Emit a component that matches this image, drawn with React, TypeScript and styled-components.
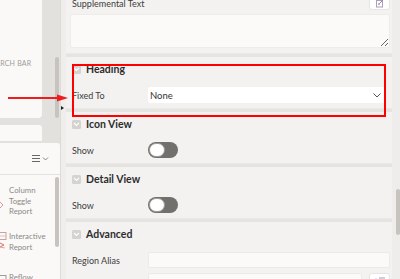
import styled, { createGlobalStyle } from 'styled-components';

const GlobalStyle = createGlobalStyle`
  html, body { margin: 0; padding: 0; }
  body {
    width: 400px;
    height: 279px;
    overflow: hidden;
    background: #f3f2f1;
    font-family: Lato, 'Noto Sans', sans-serif;
  }
  * { box-sizing: border-box; }
`;

const Frame = styled.div`
  position: relative;
  display: flex;
  width: 400px;
  height: 279px;
  overflow: hidden;
`;

// left gallery pane
const LeftPane = styled.div`
  width: 60px;
  flex: none;
  display: flex;
  flex-direction: column;
  background: #e3e1de;
`;

const TopBlock = styled.div`
  display: flex;
  height: 118px;
  flex: none;
`;

const GalleryCard = styled.div`
  width: 42px;
  background: #faf9f8;
  border-bottom-right-radius: 4px;
  overflow: hidden;
  padding-top: 59px;
`;

const Placeholder = styled.div`
  margin-left: -13px;
  font-size: 7px;
  line-height: 8px;
  letter-spacing: 0.2px;
  color: #9f9c99;
  white-space: nowrap;
`;

const Gutter = styled.div`
  flex: 1;
  display: flex;
  justify-content: flex-end;
  padding-right: 1px;
`;

const Thumb = styled.div<{ $top: number; $height: number }>`
  width: 4px;
  height: ${({ $height }) => $height}px;
  margin-top: ${({ $top }) => $top}px;
  border-radius: 2px;
  background: #c7c4c0;
  flex: none;
`;

const StubCard = styled.div`
  width: 42px;
  height: 16px;
  margin-top: 7px;
  background: #faf9f8;
  border-top-right-radius: 3px;
  flex: none;
`;

const LowerCard = styled.div`
  flex: 1;
  margin-top: 2px;
  background: #faf9f8;
  border-top-right-radius: 3px;
  display: flex;
  flex-direction: column;
  min-height: 0;
`;

const LowerHeader = styled.div`
  height: 32px;
  flex: none;
  display: flex;
  align-items: center;
  justify-content: flex-end;
  padding-right: 11px;
  border-bottom: 1px solid #e4e2df;
`;

const ListArea = styled.div`
  flex: 1;
  display: flex;
  min-height: 0;
`;

const List = styled.div`
  flex: 1;
  padding-top: 10px;
  overflow: hidden;
`;

const Item = styled.div<{ $space: number }>`
  display: flex;
  margin-bottom: ${({ $space }) => $space}px;
`;

const ItemIcon = styled.div`
  width: 9px;
  flex: none;
  overflow: hidden;
`;

const ItemText = styled.div`
  font-size: 7.8px;
  line-height: 10.7px;
  color: #8b8986;
`;

// splitter between panes
const Splitter = styled.div`
  width: 6px;
  flex: none;
  background: #efeeec;
  border-left: 1px solid #dddbd8;
  padding-top: 106px;
`;

const Caret = styled.div`
  width: 0;
  height: 0;
  border-left: 3px solid #1f1f1f;
  border-top: 2.5px solid transparent;
  border-bottom: 2.5px solid transparent;
`;

// property editor pane
const RightPane = styled.div`
  width: 326px;
  flex: none;
  display: flex;
  flex-direction: column;
  background: #f3f2f1;
`;

const TextSection = styled.div`
  height: 53px;
  flex: none;
  padding: 0 2px 0 4px;
  display: flex;
  flex-direction: column;
`;

const TopLine = styled.div`
  display: flex;
  justify-content: space-between;
  align-items: flex-start;
  height: 14px;
`;

const SmallLabel = styled.div`
  font-size: 9px;
  line-height: 10px;
  color: #3c3c3c;
  margin: -1px 0 0 2px;
  white-space: nowrap;
`;

const IconButton = styled.div`
  width: 21px;
  height: 18px;
  margin-top: -8px;
  background: #ffffff;
  border: 1px solid #e8e6e3;
  border-radius: 3px;
  display: flex;
  align-items: flex-end;
  justify-content: center;
  padding-bottom: 1px;
`;

const TextArea = styled.textarea`
  display: block;
  width: 100%;
  height: 34px;
  margin: 0;
  background: #fbfaf9;
  border: 1px solid #eeece9;
  border-radius: 2px;
  resize: vertical;
  font: inherit;
  outline: none;
`;

const Divider = styled.div`
  height: 4px;
  flex: none;
  background: #e6e4e1;
  border-top: 1px solid #ebe9e7;
`;

const Section = styled.div`
  flex: none;
  padding: 0 2px 5px 6px;
`;

const Header = styled.div`
  height: 24px;
  display: flex;
  align-items: center;
  gap: 5px;
`;

const ChevronBox = styled.div`
  width: 9px;
  height: 9px;
  border-radius: 1.5px;
  background: #d5d2cf;
  display: grid;
  place-items: center;
`;

const Title = styled.div`
  font-size: 10.5px;
  font-weight: 700;
  color: #2d2d2d;
`;

const Row = styled.div<{ $cols?: string }>`
  display: grid;
  grid-template-columns: ${({ $cols }) => $cols ?? '76px 1fr'};
  column-gap: 0;
  align-items: center;
  height: 16px;
  margin-top: 6px;
`;

const FieldLabel = styled.div`
  font-size: 9px;
  color: #3c3c3c;
  white-space: nowrap;
`;

const SelectBox = styled.div`
  height: 16px;
  margin-right: 5px;
  background: #ffffff;
  border-radius: 2px;
  display: flex;
  align-items: center;
  justify-content: space-between;
  padding: 0 4px 0 2px;
  font-size: 9.5px;
  color: #333333;
`;

const Toggle = styled.div`
  width: 30px;
  height: 16px;
  border-radius: 8px;
  background: #72706d;
  display: flex;
  align-items: center;
  padding: 1px;
`;

const Knob = styled.div`
  width: 16px;
  height: 14px;
  border-radius: 7px;
  background: #ffffff;
  border: 1px solid #9c9a97;
`;

const Input = styled.div`
  height: 16px;
  background: #fbfaf9;
  border: 1px solid #eceae7;
  border-radius: 2px;
`;

const SideButton = styled.div`
  height: 16px;
  margin-left: 7px;
  background: #ffffff;
  border: 1px solid #e8e6e3;
  border-radius: 3px;
  display: flex;
  justify-content: center;
  padding-top: 3px;
`;

const ScrollTrack = styled.div`
  flex: 1;
  display: flex;
  justify-content: flex-end;
  background: #eeedeb;
`;

// annotations drawn over the screenshot
const Highlight = styled.div`
  position: absolute;
  left: 72px;
  top: 64px;
  width: 314px;
  height: 53px;
  border: 2px solid #ff0000;
  pointer-events: none;
`;

const Arrow = styled.svg`
  position: absolute;
  left: 0;
  top: 90px;
  pointer-events: none;
`;

const Chevron = () => (
  <svg width="7" height="5" viewBox="0 0 7 5">
    <polyline points="1,1 3.5,3.5 6,1" fill="none" stroke="#ffffff" strokeWidth="1.2" />
  </svg>
);

const SelectChevron = () => (
  <svg width="8" height="5" viewBox="0 0 8 5">
    <polyline points="0.5,0.5 4,4 7.5,0.5" fill="none" stroke="#555" strokeWidth="1" />
  </svg>
);

const Section1 = ({ title, label, children }: { title: string; label: string; children: React.ReactNode }) => (
  <Section>
    <Header>
      <ChevronBox>
        <Chevron />
      </ChevronBox>
      <Title>{title}</Title>
    </Header>
    <Row>
      <FieldLabel>{label}</FieldLabel>
      {children}
    </Row>
  </Section>
);

const App = () => {
  return (
    <>
      <GlobalStyle />
      <Frame>
        <LeftPane>
          <TopBlock>
            <GalleryCard>
              <Placeholder>SEARCH BAR</Placeholder>
            </GalleryCard>
            <Gutter>
              <Thumb $top={57} $height={61} />
            </Gutter>
          </TopBlock>
          <StubCard />
          <LowerCard>
            <LowerHeader>
              <svg width="17" height="8" viewBox="0 0 17 8">
                <g stroke="#6a6866" strokeWidth="1">
                  <line x1="0" y1="0.5" x2="8" y2="0.5" />
                  <line x1="0" y1="3.5" x2="8" y2="3.5" />
                  <line x1="0" y1="6.5" x2="8" y2="6.5" />
                </g>
                <polyline points="11,2.5 13.5,5 16,2.5" fill="none" stroke="#7a7876" strokeWidth="0.9" />
              </svg>
            </LowerHeader>
            <ListArea>
              <List>
                <Item $space={11}>
                  <ItemIcon>
                    <svg width="9" height="32" viewBox="0 0 9 32">
                      <polyline points="0,17 3,20 0,23" fill="none" stroke="#d99a9a" strokeWidth="1" />
                    </svg>
                  </ItemIcon>
                  <ItemText>
                    Column
                    <br />
                    Toggle
                    <br />
                    Report
                  </ItemText>
                </Item>
                <Item $space={16}>
                  <ItemIcon>
                    <svg width="9" height="22" viewBox="0 0 9 22">
                      <rect x="-4" y="1.5" width="10" height="7" fill="none" stroke="#c9a3a3" strokeWidth="1" />
                      <line x1="-4" y1="5" x2="6" y2="5" stroke="#d5b5b5" strokeWidth="0.8" />
                      <polyline points="0,12 4,14 0,16" fill="none" stroke="#e06a6a" strokeWidth="1" />
                      <line x1="0" y1="16" x2="5" y2="17" stroke="#e58a8a" strokeWidth="0.8" />
                    </svg>
                  </ItemIcon>
                  <ItemText>
                    Interactive
                    <br />
                    Report
                  </ItemText>
                </Item>
                <Item $space={0}>
                  <ItemIcon>
                    <svg width="9" height="14" viewBox="0 0 9 14">
                      <rect x="-3" y="1.5" width="9" height="12" fill="none" stroke="#9c9a97" strokeWidth="1" />
                    </svg>
                  </ItemIcon>
                  <ItemText>Reflow</ItemText>
                </Item>
              </List>
              <Thumb $top={2} $height={70} style={{ marginRight: 1 }} />
            </ListArea>
          </LowerCard>
        </LeftPane>

        <Splitter>
          <Caret />
        </Splitter>

        <RightPane>
          <TextSection>
            <TopLine>
              <SmallLabel>Supplemental Text</SmallLabel>
              <IconButton>
                <svg width="8" height="9" viewBox="0 0 8 9">
                  <rect x="0.5" y="1.5" width="6" height="6.5" fill="none" stroke="#a89fbf" strokeWidth="1" />
                  <line x1="2.5" y1="5.5" x2="7" y2="1" stroke="#8f86aa" strokeWidth="1" />
                  <circle cx="3" cy="5" r="1" fill="#d98fb4" />
                </svg>
              </IconButton>
            </TopLine>
            <TextArea readOnly aria-label="Supplemental Text" />
          </TextSection>
          <Divider />

          <Section1 title="Heading" label="Fixed To">
            <SelectBox>
              <span>None</span>
              <SelectChevron />
            </SelectBox>
          </Section1>
          <Divider />

          <Section1 title="Icon View" label="Show">
            <Toggle>
              <Knob />
            </Toggle>
          </Section1>
          <Divider />

          <Section1 title="Detail View" label="Show">
            <Toggle>
              <Knob />
            </Toggle>
          </Section1>
          <Divider />

          <Section>
            <Header>
              <ChevronBox>
                <Chevron />
              </ChevronBox>
              <Title>Advanced</Title>
            </Header>
            <Row>
              <FieldLabel>Region Alias</FieldLabel>
              <Input />
            </Row>
            <Row $cols="76px 1fr 28px" style={{ marginTop: 5 }}>
              <span />
              <Input />
              <SideButton>
                <svg width="12" height="6" viewBox="0 0 12 6">
                  <circle cx="2" cy="3" r="1.6" fill="#c6a9d8" />
                  <line x1="5" y1="1" x2="11" y2="1" stroke="#a09eaa" strokeWidth="1" />
                  <line x1="5" y1="4" x2="11" y2="4" stroke="#b5b3bd" strokeWidth="1" />
                </svg>
              </SideButton>
            </Row>
          </Section>
        </RightPane>

        <ScrollTrack>
          <Thumb $top={189} $height={46} />
        </ScrollTrack>

        <Highlight />
        <Arrow width="70" height="16" viewBox="0 0 70 16">
          <line x1="8" y1="8" x2="60" y2="8" stroke="#ee1c1c" strokeWidth="2" />
          <polygon points="57,4.5 68,8 57,11.5" fill="#ee1c1c" />
        </Arrow>
      </Frame>
    </>
  );
};

export default App;
